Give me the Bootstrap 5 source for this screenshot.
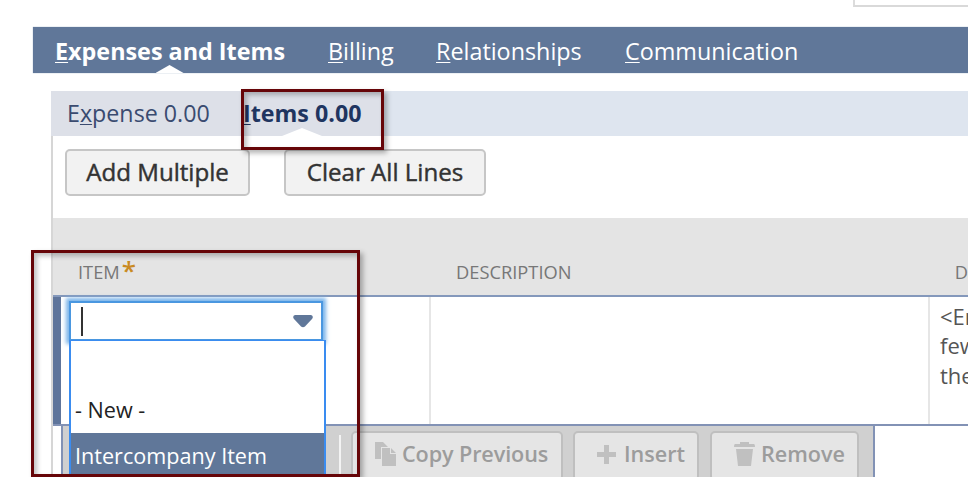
<!DOCTYPE html>
<html lang="en">
<head>
<meta charset="utf-8">
<title>Expenses and Items</title>
<meta name="viewport" content="width=device-width, initial-scale=1">
<link href="https://cdn.jsdelivr.net/npm/bootstrap@5.3.0/dist/css/bootstrap.min.css" rel="stylesheet">
<style>
body{font-family:"Open Sans","Noto Sans",sans-serif;background:#fff;overflow:hidden}
.sheet{width:968px;height:477px}
.topfield{width:115px;height:7px;border-left:2px solid #dcdcdc;border-bottom:2px solid #d9d9d9}
.mainbar{margin:20px 0 0 33px;height:46px;background:#607799;box-shadow:0 0 1px #8fa3bf}
.mainbar a,.subbar a{white-space:nowrap;text-decoration:none;line-height:1}
.mainbar a{color:#fff;font-size:23.35px;padding-top:3px}
.mt-exp{margin-left:22px;width:229px}
.mt-bil{margin-left:44px;width:65px}
.mt-rel{margin-left:43px;width:145px}
.mt-com{margin-left:44px}
u{text-decoration-thickness:1px;text-underline-offset:2px}
.notch{left:0;right:0;margin:auto;width:28px;height:8px;background:#fff;clip-path:polygon(50% 0,100% 100%,0 100%)}
.panel-area{margin:18px 0 0 51px}
.subbar{height:45px;background:#dee5ef}
.subtabs{background:#dde0e8;width:331px;padding-left:16px}
.subbar a{color:#3a4b70;font-size:23.25px;padding-top:1px}
.subbar a.on{color:#1f3560}
.st-exp{width:142px}
.st-item{margin-left:34px;width:118px}
.subbar .notch{width:40px}
.body-area{border-left:2px solid #d6d6d6}
.actions{padding:13px 0 22px 12px}
.act{height:47px;background:#f2f2f2;border:2px solid #c6c6c6;border-radius:5px;color:#333;font-size:24.1px;-webkit-text-stroke:.45px #333;line-height:41px;padding:0 0 2px;white-space:nowrap}
.act-add{width:185px}
.act-clear{width:202px;margin-left:34px}
.headrow{height:79px;background:#e4e4e4;border-bottom:2px solid #8498bb;color:#777;font-size:18.3px;line-height:20px;white-space:nowrap}
.headrow>div{padding-bottom:13px}
.h-item{width:404px;padding-left:25px}
.h-desc{width:500px}
.ast{color:#c98a22;font-size:26px;line-height:16px;font-weight:600;margin-left:2px}
.linerow{height:129px;border-bottom:2px solid #8292b5;color:#555;font-size:22px;line-height:29.3px}
.linerow .c1{width:378px;border-left:8px solid #5f759b;border-right:2px solid #e6e6e6}
.linerow .c2{width:499px;border-right:2px solid #e6e6e6}
.c3{padding:5px 0 0 10px}
.tools{width:814px;height:51px;margin-left:8px;background:#d0d0d0;border-left:2px solid #8292b5;border-right:2px solid #8292b5}
.gap-sep{width:278px;border-right:2px solid #f3f3f3;margin-top:9px}
.tool{height:50px;background:#e5e5e5;border:2px solid #bfbfbf;border-radius:5px;color:#9c9c9c;font-size:21.6px;font-weight:600;white-space:nowrap;line-height:1;margin-top:5px;padding:0 0 4px 22px}
.tool svg{fill:#c0c0c0;flex:none}
.tl-copy{width:212px;margin-left:10px;letter-spacing:-.1px}
.tl-ins{width:126px;margin-left:10px}
.tl-rem{width:149px;margin-left:11px}
.ic-gap{margin-left:6px}
.tl-ins .ic-gap{margin-left:8px}
.pick{left:69px;top:301px;width:254px;height:40px;border:2px solid #4a97e0;background:#fff;box-shadow:0 0 4px 3px #7ab4ea;padding:0 8px 0 10px}
.caret-bar{width:1.5px;height:29px;background:#333}
.opts{left:69px;top:340px;width:257px;height:137px;border:solid #3a8cf0;border-width:1px 2px 0;background:#fff;font-size:21.6px;line-height:45px;color:#222;white-space:nowrap}
.opts div{height:46px;padding-left:4px}
.opts .hot{background:#607799;color:#fff}
.frame{border:3px solid #660508;box-shadow:3px 3px 5px rgba(0,0,0,.3),inset 3px 3px 5px rgba(0,0,0,.25)}
.frame-tab{left:241px;top:89px;width:143px;height:61px}
.frame-item{left:31px;top:250px;width:329px;height:227px}
</style>
</head>
<body>
<div class="sheet position-relative overflow-hidden">
  <div class="topfield ms-auto"></div>
  <nav class="mainbar d-flex align-items-center">
    <a href="#" class="mt-exp fw-bold h-100 position-relative d-flex align-items-center"><span><u>E</u>xpenses and Items</span><span class="notch position-absolute bottom-0"></span></a>
    <a href="#" class="mt-bil"><u>B</u>illing</a>
    <a href="#" class="mt-rel"><u>R</u>elationships</a>
    <a href="#" class="mt-com"><u>C</u>ommunication</a>
  </nav>
  <div class="panel-area">
    <div class="subbar d-flex">
      <div class="subtabs d-flex align-items-center">
        <a href="#" class="st-exp">E<u>x</u>pense 0.00</a>
        <a href="#" class="st-item on fw-bold h-100 position-relative d-flex align-items-center"><span><u>I</u>tems 0.00</span><span class="notch position-absolute bottom-0"></span></a>
      </div>
    </div>
    <div class="body-area">
      <div class="actions d-flex">
        <button class="act act-add">Add Multiple</button>
        <button class="act act-clear">Clear All Lines</button>
      </div>
      <div class="headrow d-flex align-items-end">
        <div class="h-item d-flex">ITEM<span class="ast">*</span></div>
        <div class="h-desc">DESCRIPTION</div>
        <div>D</div>
      </div>
      <div class="linerow d-flex">
        <div class="c1 flex-shrink-0"></div>
        <div class="c2 flex-shrink-0"></div>
        <div class="c3 text-nowrap">&lt;En<br>few<br>the</div>
      </div>
      <div class="tools d-flex">
        <div class="gap-sep flex-shrink-0"></div>
        <button class="tool tl-copy d-flex align-items-center">
          <svg width="21" height="24" viewBox="0 0 21 24"><path d="M0 0H8L13 5H6V17H0Z"/><path d="M7 6H15V12H21V24H7ZM16 6L21 11H16Z"/></svg><span class="ic-gap">Copy Previous</span></button>
        <button class="tool tl-ins d-flex align-items-center">
          <svg width="19" height="19" viewBox="0 0 19 19"><path d="M7 0H12V7H19V12H12V19H7V12H0V7H7Z"/></svg><span class="ic-gap">Insert</span></button>
        <button class="tool tl-rem d-flex align-items-center">
          <svg width="21" height="24" viewBox="0 0 21 24"><path d="M6 0H15V2H20Q21 2 21 5H0Q0 2 1 2H6ZM2 7H19L17 24H4Z"/></svg><span class="ic-gap">Remove</span></button>
      </div>
    </div>
  </div>
  <div class="pick position-absolute d-flex align-items-center justify-content-between">
    <span class="caret-bar"></span>
    <svg width="20" height="13" viewBox="0 0 20 13"><path d="M2 0H18Q21 1 19 4L12 11.500Q10 13 8 11.500L1 4Q-1 1 2 0Z" fill="#607799"/></svg>
  </div>
  <div class="opts position-absolute">
    <div></div><div>- New -</div><div class="hot">Intercompany Item</div>
  </div>
  <div class="frame frame-tab position-absolute"></div>
  <div class="frame frame-item position-absolute"></div>
</div>
<script src="https://cdn.jsdelivr.net/npm/bootstrap@5.3.0/dist/js/bootstrap.bundle.min.js"></script>
</body>
</html>
